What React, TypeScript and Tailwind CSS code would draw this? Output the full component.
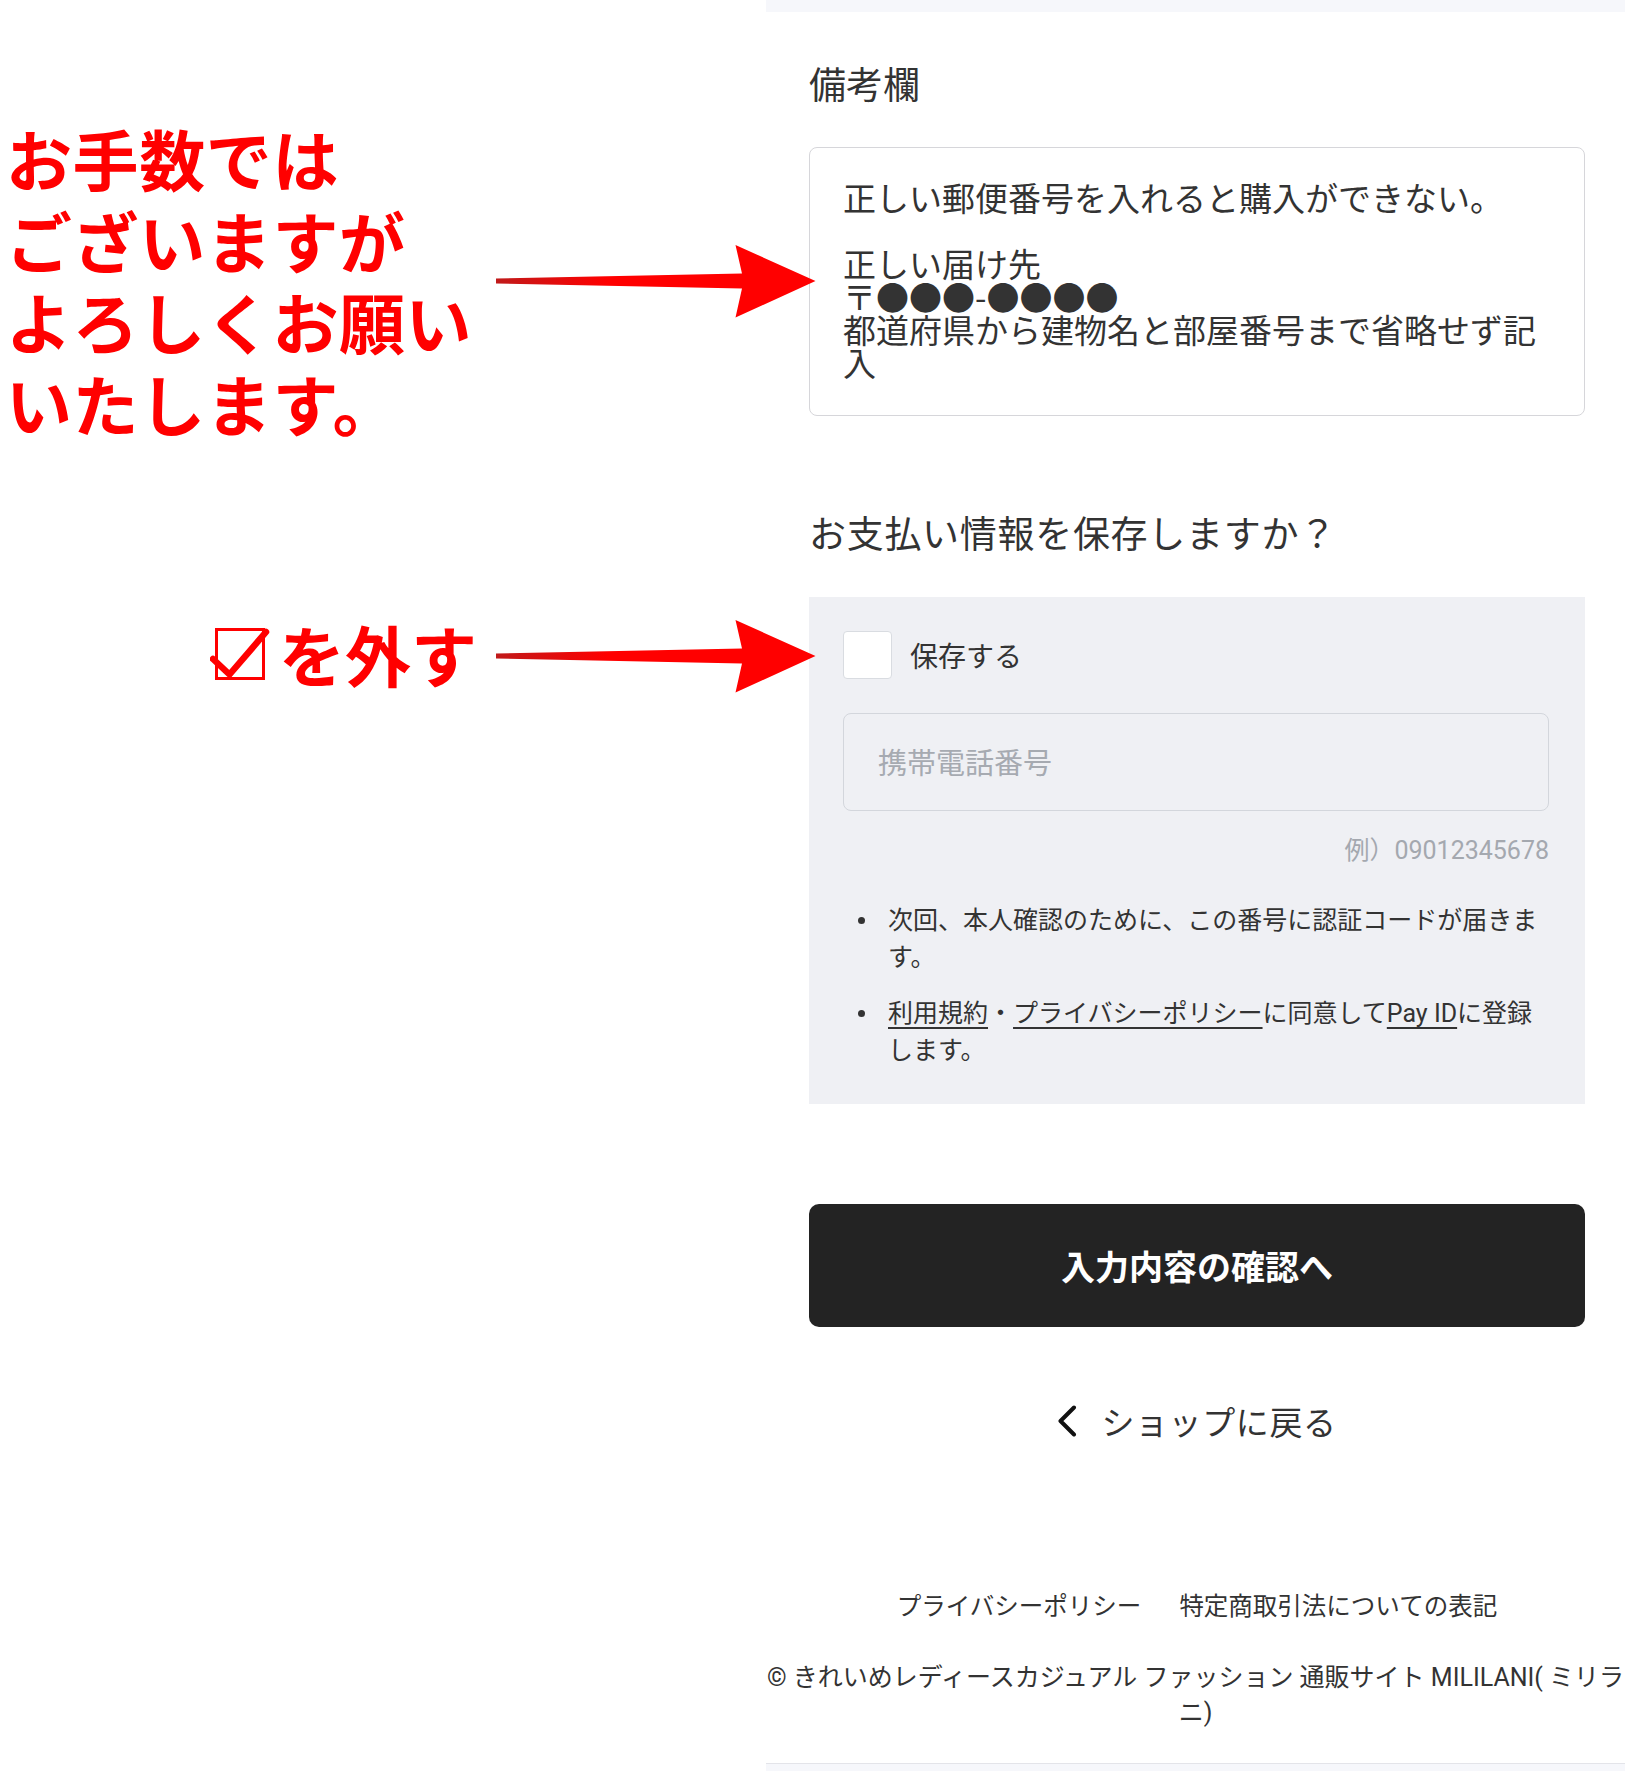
import React from "react";

function Arrow({ cy }: { cy: number }) {
  const pts = `496,${cy - 2.5} 742,${cy - 7.5} 735.5,${cy - 36} 815.5,${cy} 735.5,${cy + 36.5} 742,${cy + 7.5} 496,${cy + 2.5}`;
  return <polygon points={pts} fill="url(#arrowGrad)" />;
}

export default function App() {
  return (
    <div className="relative flex w-[1625px] min-h-[1771px] bg-white">
      {/* Annotation column */}
      <div className="w-[766px] shrink-0 font-['Noto_Sans_CJK_JP',sans-serif] font-bold text-[#ff0000] text-[66px] leading-[81.5px]">
        <p className="pt-[117px] pl-[6px] whitespace-nowrap tracking-[0.6px]">
          お手数では
          <br />
          ございますが
          <br />
          よろしくお願い
          <br />
          いたします。
        </p>
        <div className="mt-[170px] flex h-[82px] items-center">
          <svg
            className="ml-[210px] shrink-0"
            width="60"
            height="56"
            viewBox="210 626 60 56"
            aria-hidden="true"
          >
            <rect x="216.5" y="629.5" width="47" height="49" fill="none" stroke="#ff0000" strokeWidth="3" />
            <polyline
              points="213,659 229.5,674.5 266,632"
              fill="none"
              stroke="#ff0000"
              strokeWidth="6.5"
              strokeLinecap="round"
              strokeLinejoin="round"
            />
          </svg>
          <span className="ml-[9px] whitespace-nowrap">を外す</span>
        </div>
      </div>

      {/* Main column */}
      <main className="flex w-[859px] shrink-0 flex-col font-['Roboto','Noto_Sans_CJK_JP',sans-serif] text-[#333333]">
        <div className="h-[12px] bg-[#f6f7fb]" />
        <div className="pl-[43px] pr-[40px]">
          <h2 className="mt-[49px] font-['Noto_Sans_CJK_JP',sans-serif] text-[37px] leading-[44px] font-normal">
            備考欄
          </h2>
          <div className="mt-[42px] h-[269px] rounded-[8px] border border-[#d6d6da] bg-white pt-[33px] pl-[33px] pr-[30px] font-['Noto_Sans_CJK_JP',sans-serif] text-[33px] leading-[33px] whitespace-pre-wrap text-[#333333]">
            {"正しい郵便番号を入れると購入ができない。\n\n正しい届け先\n〒●●●-●●●●\n都道府県から建物名と部屋番号まで省略せず記入"}
          </div>

          <h2 className="mt-[94px] font-['Noto_Sans_CJK_JP',sans-serif] text-[37px] leading-[44px] font-normal tracking-[0.7px]">
            お支払い情報を保存しますか？
          </h2>

          <div className="mt-[43px] bg-[#eff0f4] pt-[34px] pb-[35px] pl-[34px] pr-[36px]">
            <div className="flex items-center gap-[18px]">
              <span className="h-[48px] w-[49px] rounded-[4px] border border-[#d9dce1] bg-white" />
              <span className="font-['Noto_Sans_CJK_JP',sans-serif] text-[28px] leading-[40px]">保存する</span>
            </div>
            <div className="mt-[34px] flex h-[98px] items-center rounded-[8px] border border-[#d3d6dc] pl-[34px] font-['Noto_Sans_CJK_JP',sans-serif] text-[29px] text-[#a6aab1]">
              携帯電話番号
            </div>
            <p className="mt-[22px] text-right text-[25px] leading-[36px] text-[#a4a8af]">
              例）09012345678
            </p>
            <ul className="mt-[33px] flex flex-col gap-[19px] text-[25px] leading-[37px] text-[#333333]">
              <li className="flex">
                <span className="flex h-[37px] w-[45px] shrink-0 items-center pl-[15px]">
                  <span className="h-[7px] w-[7px] rounded-full bg-[#333333]" />
                </span>
                <span className="min-w-0 flex-1">次回、本人確認のために、この番号に認証コードが届きます。</span>
              </li>
              <li className="flex">
                <span className="flex h-[37px] w-[45px] shrink-0 items-center pl-[15px]">
                  <span className="h-[7px] w-[7px] rounded-full bg-[#333333]" />
                </span>
                <span className="min-w-0 flex-1">
                  <span className="underline underline-offset-[5px]">利用規約</span>・<span className="underline underline-offset-[5px]">プライバシーポリシー</span>に同意して<span className="underline underline-offset-[5px]">Pay ID</span>に登録します。
                </span>
              </li>
            </ul>
          </div>

          <button
            type="button"
            className="mt-[100px] flex h-[123px] w-full items-center justify-center rounded-[10px] bg-[#232323] font-['Noto_Sans_CJK_JP',sans-serif] text-[34px] font-bold text-white"
          >
            入力内容の確認へ
          </button>

          <div className="mt-[72px] flex items-center justify-center gap-[22px]">
            <svg width="22" height="32" viewBox="0 0 22 32" aria-hidden="true">
              <polyline
                points="17,2.5 3.5,16 17,29.5"
                fill="none"
                stroke="#111111"
                strokeWidth="4"
                strokeLinecap="round"
                strokeLinejoin="round"
              />
            </svg>
            <span className="font-['Noto_Sans_CJK_JP',sans-serif] text-[33px] leading-[44px] tracking-[0.6px]">ショップに戻る</span>
          </div>

          <div className="mt-[144px] flex items-center justify-center gap-[38px] font-['Noto_Sans_CJK_JP',sans-serif] text-[24.5px] leading-[36px]">
            <span>プライバシーポリシー</span>
            <span>特定商取引法についての表記</span>
          </div>
        </div>

        <p className="mt-[37px] text-center text-[25px] leading-[35px]">
          <span className="whitespace-nowrap">© きれいめレディースカジュアル ファッション 通販サイト MILILANI( ミリラ</span>
          <br />
          ニ)
        </p>

        <div className="mt-[33px] h-[8px] border-t border-[#e3e4e9] bg-[#f6f7fb]" />
      </main>

      {/* Arrows overlay */}
      <svg
        className="pointer-events-none absolute left-[490px] top-[230px]"
        width="330"
        height="480"
        viewBox="490 230 330 480"
        aria-hidden="true"
      >
        <defs>
          <linearGradient id="arrowGrad" x1="496" y1="0" x2="816" y2="0" gradientUnits="userSpaceOnUse">
            <stop offset="0" stopColor="#c01a1a" />
            <stop offset="0.35" stopColor="#ff0000" />
            <stop offset="1" stopColor="#ff0000" />
          </linearGradient>
        </defs>
        <Arrow cy={281} />
        <Arrow cy={656} />
      </svg>
    </div>
  );
}
